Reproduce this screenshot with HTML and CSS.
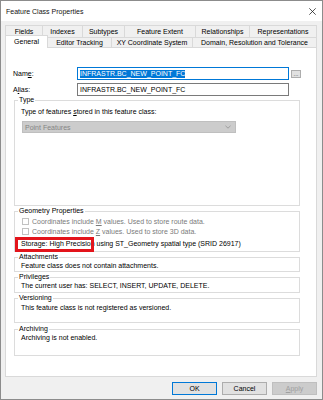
FILE: index.html
```html
<!DOCTYPE html>
<html lang="en">
<head>
<meta charset="utf-8">
<title>Feature Class Properties</title>
<link rel="stylesheet" href="styles.css">
</head>
<body>
<div class="window">
  <div class="titlebar">
    <span class="title">Feature Class Properties</span>
    <svg class="close" width="7" height="7" viewBox="0 0 7 7"><path d="M0.3 0.3L6.7 6.7M6.7 0.3L0.3 6.7" stroke="#1a1a1a" stroke-width="0.75" fill="none"/></svg>
  </div>
  <div class="body">
    <div class="tabs">
      <div class="tabrow back">
        <div class="tab">Fields</div>
        <div class="tab">Indexes</div>
        <div class="tab">Subtypes</div>
        <div class="tab">Feature Extent</div>
        <div class="tab">Relationships</div>
        <div class="tab">Representations</div>
      </div>
      <div class="tabrow front">
        <div class="tab sel">General</div>
        <div class="tab">Editor Tracking</div>
        <div class="tab">XY Coordinate System</div>
        <div class="tab">Domain, Resolution and Tolerance</div>
      </div>
    </div>
    <div class="panel">
      <div class="names">
        <span class="lbl">Nam<u>e</u>:</span>
        <div class="input focus"><span class="selected">INFRASTR.BC_NEW_POINT_FC</span></div>
        <div class="dots">...</div>
        <span class="lbl">A<u>l</u>ias:</span>
        <div class="input">INFRASTR.BC_NEW_POINT_FC</div>
      </div>

      <fieldset class="group g-type">
        <legend>Type</legend>
        <div class="line">Type of features <u>s</u>tored in this feature class:</div>
        <div class="combo"><span>Point Features</span>
          <svg width="6" height="4" viewBox="0 0 6 4"><path d="M0.5 0.8L3 3.2L5.5 0.8" stroke="#8a8a8a" stroke-width="0.7" fill="none"/></svg>
        </div>
      </fieldset>

      <fieldset class="group g-geom">
        <legend>Geometry Properties</legend>
        <div class="check"><span class="box"></span><span>Coordinates include <u>M</u> values. Used to store route data.</span></div>
        <div class="check"><span class="box"></span><span>Coordinates include <u>Z</u> values. Used to store 3D data.</span></div>
        <div class="line storage"><span class="mark">Storage: High Precision</span> using ST_Geometry spatial type (SRID 26917)</div>
      </fieldset>

      <fieldset class="group g-att">
        <legend>Attachments</legend>
        <div class="line">Feature class does not contain attachments.</div>
      </fieldset>

      <fieldset class="group g-priv">
        <legend>Privileges</legend>
        <div class="line">The current user has: SELECT, INSERT, UPDATE, DELETE.</div>
      </fieldset>

      <fieldset class="group g-ver">
        <legend>Versioning</legend>
        <div class="line">This feature class is not registered as versioned.</div>
      </fieldset>

      <fieldset class="group g-arch">
        <legend>Archiving</legend>
        <div class="line">Archiving is not enabled.</div>
      </fieldset>
    </div>
    <div class="buttons">
      <div class="btn default">OK</div>
      <div class="btn">Cancel</div>
      <div class="btn disabled"><u>A</u>pply</div>
    </div>
  </div>
</div>
</body>
</html>
```

FILE: styles.css
```css
*, *::before, *::after { box-sizing: border-box; }
html, body { margin: 0; padding: 0; }
body {
  font-family: "Liberation Sans", Arial, sans-serif;
  font-size: 7px;
  line-height: 9px;
  color: #000;
  background: #fff;
}
u { text-decoration: underline; text-underline-offset: 1px; text-decoration-thickness: 0.5px; }

.window {
  width: 323px;
  height: 400px;
  border: 1px solid #8c8c8c;
  background: #f0f0f0;
  display: flex;
  flex-direction: column;
}
.titlebar {
  height: 20px;
  flex: none;
  background: #fff;
  display: flex;
  align-items: center;
  justify-content: space-between;
  padding: 0 6px 0 5px;
}
.title { font-size: 7px; color: #111; }
.close { display: block; }

.body {
  flex: 1;
  padding: 4px 5px 0 4px;
  display: flex;
  flex-direction: column;
}

.tabs { display: flex; flex-direction: column; }
.tabrow { display: grid; }
.back { grid-template-columns: 38px 40px 42px 71px 54px 67px; height: 12px; }
.front { grid-template-columns: 43px 64px 81px 124px; height: 10px; }
.tab {
  background: #f0f0f0;
  border-top: 1px solid #d9d9d9;
  border-right: 1px solid #d9d9d9;
  display: flex;
  align-items: center;
  justify-content: center;
  white-space: nowrap;
  line-height: 8px;
}
.tab:first-child { border-left: 1px solid #d9d9d9; }
.tab.sel {
  background: #fff;
  margin-top: -2px;
  margin-bottom: -1px;
  position: relative;
  z-index: 1;
}

.panel {
  height: 330px;
  flex: none;
  background: #fff;
  border: 1px solid #d9d9d9;
  padding: 19px 0 0 0;
}

.names {
  display: grid;
  grid-template-columns: 62px 212px 10px;
  grid-template-rows: 13px 13px;
  column-gap: 2px;
  row-gap: 3px;
  padding-left: 7px;
}
.lbl { align-self: center; }
.input {
  border: 1px solid #7a7a7a;
  background: #fff;
  padding-left: 2px;
  display: flex;
  align-items: center;
  white-space: nowrap;
  overflow: hidden;
}
.input.focus { border-color: #0078d7; }
.selected { background: #0078d7; color: #fff; line-height: 8px; }
.dots {
  align-self: center;
  height: 8px;
  margin-top: 1px;
  background: #e1e1e1;
  border: 1px solid #adadad;
  font-size: 6px;
  line-height: 6px;
  text-align: center;
  color: #333;
}

.group {
  margin: 0 0 0 8px;
  width: 286px;
  border: 1px solid #dcdcdc;
  padding: 0 6px;
  min-width: 0;
}
.group legend {
  padding: 0 1px;
  margin-left: -3px;
  line-height: 8px;
}
.line { white-space: nowrap; }

.g-type { height: 110px; padding-top: 3px; }
.combo {
  margin: 5px 0 0 1px;
  width: 214px;
  height: 12px;
  background: #cccccc;
  border: 1px solid #bfbfbf;
  display: flex;
  align-items: center;
  justify-content: space-between;
  padding: 0 4px 0 2px;
  color: #858585;
}
.combo svg { display: block; }

.g-geom { margin-top: 1px; height: 45px; padding-top: 1px; }
.check {
  display: flex;
  align-items: center;
  height: 10px;
  color: #7a7a7a;
  white-space: nowrap;
  margin-left: 1px;
}
.box {
  width: 7px;
  height: 7px;
  border: 1px solid #c2c2c2;
  background: #fff;
  margin-right: 3px;
  flex: none;
}
.storage { margin-top: 3px; }
.mark { position: relative; }
.mark::after {
  content: "";
  position: absolute;
  left: -6px;
  right: 1px;
  top: -3px;
  height: 15px;
  border: 3px solid #e3141b;
}

.g-att { margin-top: 1px; height: 19px; }
.g-priv { margin-top: 1px; height: 20px; }
.g-ver { margin-top: 1px; height: 29px; padding-top: 1px; }
.g-arch { margin-top: 2px; height: 31px; }

.buttons {
  display: flex;
  justify-content: flex-end;
  gap: 5px;
  margin-top: 5px;
}
.btn {
  width: 45px;
  height: 13px;
  background: #e1e1e1;
  border: 1px solid #adadad;
  display: flex;
  align-items: center;
  justify-content: center;
}
.btn.default { border-color: #0078d7; }
.btn.disabled { background: #cccccc; border-color: #bfbfbf; color: #a0a0a0; }
```
